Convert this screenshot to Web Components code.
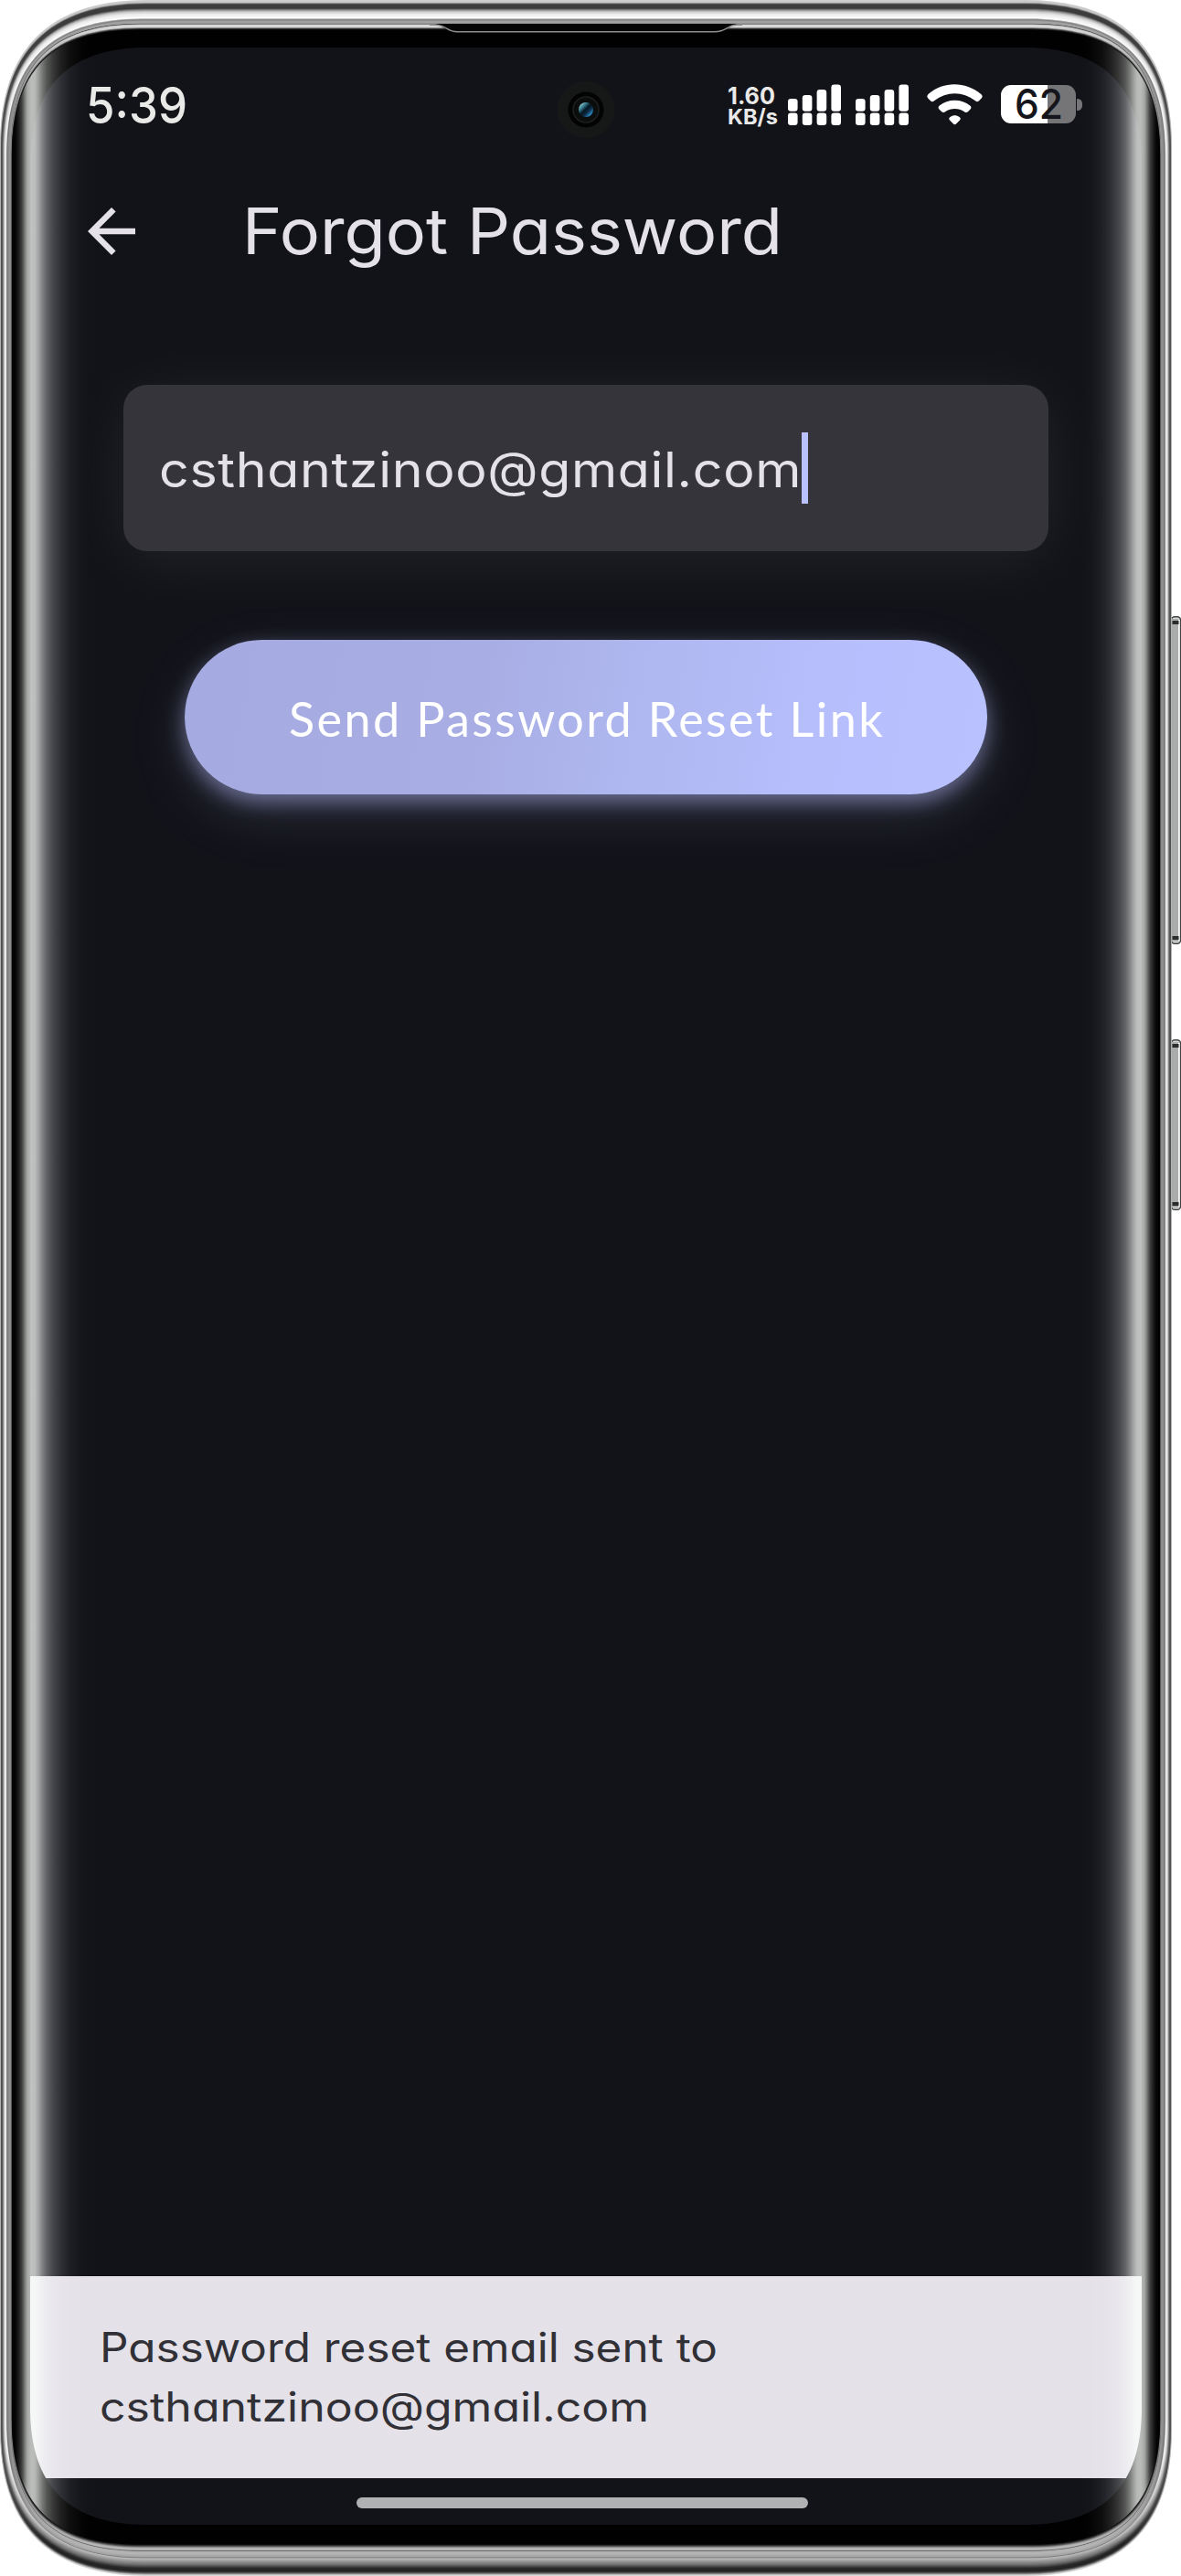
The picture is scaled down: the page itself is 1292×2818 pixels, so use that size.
<!DOCTYPE html>
<html lang="en">
<head>
<meta charset="utf-8">
<title>Forgot Password</title>
<style>
html,body{margin:0;background:#fff}
body{font-family:Inter,"Noto Sans",sans-serif;width:1292px;height:2818px;overflow:hidden}
</style>
</head>
<body>
<phone-frame>
  <status-bar time="5:39" rate="1.60" unit="KB/s" battery="62"></status-bar>
  <app-bar><fit-text width="591">Forgot Password</fit-text></app-bar>
  <form-area>
    <text-field><fit-text width="703">csthantzinoo@gmail.com</fit-text></text-field>
    <pill-button><fit-text width="652">Send Password Reset Link</fit-text></pill-button>
  </form-area>
  <snack-bar>
    <fit-text width="676">Password reset email sent to</fit-text>
    <fit-text width="601">csthantzinoo@gmail.com</fit-text>
  </snack-bar>
  <nav-handle></nav-handle>
</phone-frame>
<script>
const define = (name, html, setup) => customElements.define(name, class extends HTMLElement {
  connectedCallback() {
    if (this.shadowRoot) return;
    const root = this.attachShadow({mode: 'open'});
    root.innerHTML = typeof html === 'function' ? html(this) : html;
    if (setup) setup(this, root);
  }
});

/* Path of a box with smooth corners of length r and tightness c */
function smoothBox(x0, y0, x1, y1, r, c) {
  const k = r * c;
  return `M${x0} ${y0+r}C${x0} ${y0+k} ${x0+k} ${y0} ${x0+r} ${y0}H${x1-r}` +
    `C${x1-k} ${y0} ${x1} ${y0+k} ${x1} ${y0+r}V${y1-r}` +
    `C${x1} ${y1-k} ${x1-k} ${y1} ${x1-r} ${y1}H${x0+r}` +
    `C${x0+k} ${y1} ${x0} ${y1-k} ${x0} ${y1-r}Z`;
}

/* Metal rim: side, top and bottom inset, then grey level at top, side and bottom */
const rim = [
  [0,0,0,205,200,225],[.8,2.5,1.5,195,165,190],[1.4,4.5,3,60,70,90],[2.6,9,5,58,90,32],
  [3.4,10.5,8,130,130,40],[4.4,12.5,12,200,190,110],[5.2,15,16,235,225,155],[6.4,20,19,255,250,190],
  [7,20.6,20,190,210,120],[7.6,21.5,21,125,110,165],[8.6,23,24,160,135,180],[11.4,25.5,27,165,150,175],
  [12,26,27.6,60,110,90],[12.4,27,28.6,215,130,190],[12.8,29.5,30.5,215,80,170],[13,31,32.5,70,20,70],[13.2,32.5,34.5,0,0,0]
];
function rimLayers() {
  let defs = '', paths = '', n = 0;
  const g = v => `rgb(${v|0},${(v+1)|0},${v|0})`;
  for (let i = 0; i < rim.length; i++) {
    const steps = i < rim.length - 1 ? 4 : 1;
    for (let s = 0; s < steps; s++) {
      const a = rim[i], b = rim[i+1] || a, t = s / steps, m = a.map((v, j) => v + (b[j] - v) * t);
      const r = 160 - 20 * m[0] / 13, c = .335 - .025 * m[0] / 13;
      defs += `<linearGradient id="m${n}" gradientUnits="userSpaceOnUse" x1="0" y1="0" x2="0" y2="2818">
        <stop offset=".01" stop-color="${g(m[3])}"/><stop offset=".05" stop-color="${g(m[4])}"/>
        <stop offset=".952" stop-color="${g(m[4])}"/><stop offset=".988" stop-color="${g(m[5])}"/></linearGradient>`;
      paths += `<path fill="url(#m${n})" d="${smoothBox(m[0], m[1], 1282-m[0], 2818-m[2], r, c)}"/>`;
      n++;
    }
  }
  return `<defs>${defs}</defs>${paths}`;
}

/* Curved glass reflection, mirrored on both edges: distance from the edge, alpha */
const sheen = [[13,0],[17,.02],[20,.1],[24,.25],[27,.47],[30,.66],[34,.74],[38,.73],[42,.62],[46,.48],[51,.34],[58,.22],[66,.13],[76,.055],[88,.015],[98,0]];
const sheenStops = [...sheen.map(([x,a]) => [x/1282,a]), ...sheen.slice().reverse().map(([x,a]) => [1-x/1282,a])]
  .map(([o,a]) => `<stop offset="${o}" stop-color="#fcfffc" stop-opacity="${a}"/>`).join('');

const sideKey = (y, h) => `<g transform="translate(1281 ${y})">
  <rect x=".5" y=".8" width="10" height="${h-1.6}" rx="3.5" fill="#d8dad8" stroke="#3f4341" stroke-width="1.4"/>
  <rect x="1" y="3" width="7.5" height="${h-6}" fill="#a9acaa"/><rect x="8" y="4" width="1.6" height="${h-8}" fill="#f3f4f3"/>
  <path d="M1.5 5h7v4h-7zM1.5 ${h-9}h7v4h-7z" fill="#292d2b"/></g>`;

define('phone-frame', () => `<style>
  :host{display:grid;width:1292px;height:2818px}
  svg{grid-area:1/1;display:block;z-index:0}
  .over{z-index:2;pointer-events:none}
  main{grid-area:1/1;z-index:1;display:flex;flex-direction:column;margin:52px 43px 56px 33px;background:#121319;
    clip-path:path("${smoothBox(0,0,1216,2710,128,.33)}")}
</style>
<svg width="1292" height="2818">${sideKey(674,359)}${sideKey(1137,187)}${rimLayers()}
  <path d="M474 26H808C798 27 796 35 783 35H499C486 35 486 27 474 26Z" fill="#050505"/>
  <path d="M470 27.3H476C488 27.3 489 34.8 500 34.8H782C795 34.8 796 27.3 806 27.3H812" fill="none" stroke="#8c8e8c" stroke-width="1.5"/>
</svg>
<main><slot></slot></main>
<svg class="over" width="1292" height="2818">
  <defs><linearGradient id="s" gradientUnits="userSpaceOnUse" x1="0" y1="0" x2="1282" y2="0">${sheenStops}</linearGradient>
  <linearGradient id="l" x1="0" y1="0" x2="1" y2="1"><stop offset=".1" stop-color="#9fdbe2"/><stop offset=".32" stop-color="#2b6d80"/><stop offset=".48" stop-color="#07131d"/><stop offset=".65" stop-color="#0d304d"/><stop offset=".85" stop-color="#2f93cf"/></linearGradient></defs>
  <path d="${smoothBox(13.2,32.5,1268.8,2783.5,140,.31)}" fill="url(#s)"/>
  <circle cx="641" cy="120" r="31.5" fill="#161717"/><circle cx="641" cy="120" r="19.5" fill="#030303"/>
  <circle cx="641" cy="120" r="14" fill="#0b0c0c" stroke="#1d1e1e" stroke-width="1.6"/><circle cx="641" cy="120" r="8" fill="url(#l)"/>
</svg>`);

const bars = `<svg width="58" height="46" viewBox="0 0 58 46" fill="#fff">${[16,12,6,.5].map((y,i) =>
  `<rect x="${i*15.8}" y="${y}" width="10.6" height="${29.7-y}" rx="3.2"/><rect x="${i*15.8}" y="31.6" width="10.6" height="13.4" rx="3.2"/>`).join('')}</svg>`;
define('status-bar', el => `<style>
  :host{display:flex;align-items:center;height:126px;padding:0 65px 0 61px;color:#e9e9e8}
  .time{font-size:55.5px;font-weight:500;line-height:66px}
  .rate{font-weight:700;margin:-1px 11px 0 auto}
  .rate fit-text:first-child{font-size:26px;line-height:27px}
  .rate fit-text:last-child{font-size:23.5px;line-height:20px}
  svg{display:block;margin-top:-1px}
  .sig{margin-right:16px}
  .wifi{margin:-2px 20px 0 4px}
  .bat{display:flex;align-items:center;justify-content:center;width:82px;height:42px;border-radius:11px;margin-top:-2px;
    background:linear-gradient(90deg,#fff 51px,#757577 51px);color:#15161c;font-size:45px;font-weight:500;line-height:44px}
  .nub{width:6px;height:13px;border-radius:1px 6px 6px 1px;background:#757577;margin:-2px 0 0 1px}
</style>
<fit-text class="time" width="111">${el.getAttribute('time')}</fit-text>
<div class="rate"><fit-text width="52">${el.getAttribute('rate')}</fit-text><fit-text width="55">${el.getAttribute('unit')}</fit-text></div>
<div class="sig">${bars}</div><div class="sig">${bars}</div>
<svg class="wifi" width="61" height="45" viewBox="0 0 61 45" fill="#fff">
  <path d="M1.5 11C18-3.5 42-3.5 59.3 11C61 12.6 61 14 59.7 15.4L56.8 18.4C55.6 19.5 54.3 19.4 53 18.3C39 7.6 22 7.6 8 18.3C6.7 19.4 5.4 19.5 4.2 18.4L1.2 15.4C0 14 0 12.6 1.5 11Z"/>
  <path d="M13.8 23.5C23 15.7 38 15.7 47.2 23.5C48.8 25 48.8 26.2 47.6 27.5L44.8 30.3C43.5 31.4 42.4 31.3 41 30.2C34.5 25.8 26.5 25.8 20 30.2C18.6 31.3 17.5 31.4 16.2 30.3L13.4 27.5C12.2 26.2 12.2 25 13.8 23.5Z"/>
  <path d="M25.5 36C28.5 33.8 32.5 33.8 35.5 36C37 37 37.2 38.2 36 39.5L32.3 43.3C31 44.5 30 44.5 28.7 43.3L25 39.5C23.8 38.2 24 37 25.5 36Z"/>
</svg>
<div class="bat"><fit-text width="53">${el.getAttribute('battery')}</fit-text></div><div class="nub"></div>`);

define('app-bar', `<style>
  :host{display:flex;align-items:center;gap:104px;height:149px;padding-left:50px;color:#e4e1e8;
    font-size:69.5px;line-height:90px;font-feature-settings:"cv11"}
  svg{flex:none}
</style><svg width="78" height="78" viewBox="0 0 24 24" fill="#e4e1e8"><path d="M20 11H7.83l5.59-5.59L12 4l-8 8 8 8 1.41-1.41L7.83 13H20v-2z"/></svg><slot></slot>`);

define('form-area', `<style>
  :host{display:flex;flex-direction:column;align-items:center;gap:97px;flex:1;padding:94px 102px 0}
</style><slot></slot>`);

define('text-field', `<style>
  :host{display:flex;align-items:center;box-sizing:border-box;align-self:stretch;height:182px;padding-left:39px;border-radius:26px;
    background:#35343a;color:#e4e1e8;font-size:53.5px;line-height:80px;letter-spacing:.6px;font-feature-settings:"cv11";
    box-shadow:0 10px 70px rgba(225,240,240,.075)}
  ::slotted(fit-text){padding-top:3px}
  i{width:6.5px;height:78px;background:#b9c1ff}
</style><slot></slot><i></i>`);

define('pill-button', `<style>
  :host{display:flex;align-items:center;justify-content:center;width:878px;height:169px;border-radius:85px;color:#fff;
    font:400 52.5px/78px Lato,sans-serif;letter-spacing:2.4px;
    background:linear-gradient(100deg,#a5abe0,#a8aee4 37%,#b0b8f1 58%,#b7bffe 82%,#b9c1ff);
    box-shadow:0 9px 22px rgba(185,193,255,.48),0 22px 64px rgba(185,193,255,.13)}
  ::slotted(fit-text){padding:2px 0 0 2px}
</style><slot></slot>`);

define('snack-bar', `<style>
  :host{display:block;box-sizing:border-box;height:221px;padding:46px 76px 0;background:#e4e1e8;color:#303036;
    font-size:44.5px;line-height:65px;font-feature-settings:"cv11"}
</style><slot></slot>`);

define('nav-handle', `<style>
  :host{display:flex;height:51px;padding:21px 0 0 357px;box-sizing:border-box}
  i{width:494px;height:12px;border-radius:6px;background:#b0b1b3}
</style><i></i>`);

/* One line of text stretched to a set advance width. Defined last: it measures
   itself in the font its container passes down. */
define('fit-text', `<style>
  :host{display:block;white-space:pre;flex:none}
  span{display:inline-block;transform-origin:0 50%}
</style><span><slot></slot></span>`, (el, root) => {
  const span = root.querySelector('span'), w = +el.getAttribute('width');
  const natural = span.getBoundingClientRect().width;
  el.style.width = w + 'px';
  span.style.transform = `scaleX(${w / natural})`;
});
</script>
</body>
</html>
